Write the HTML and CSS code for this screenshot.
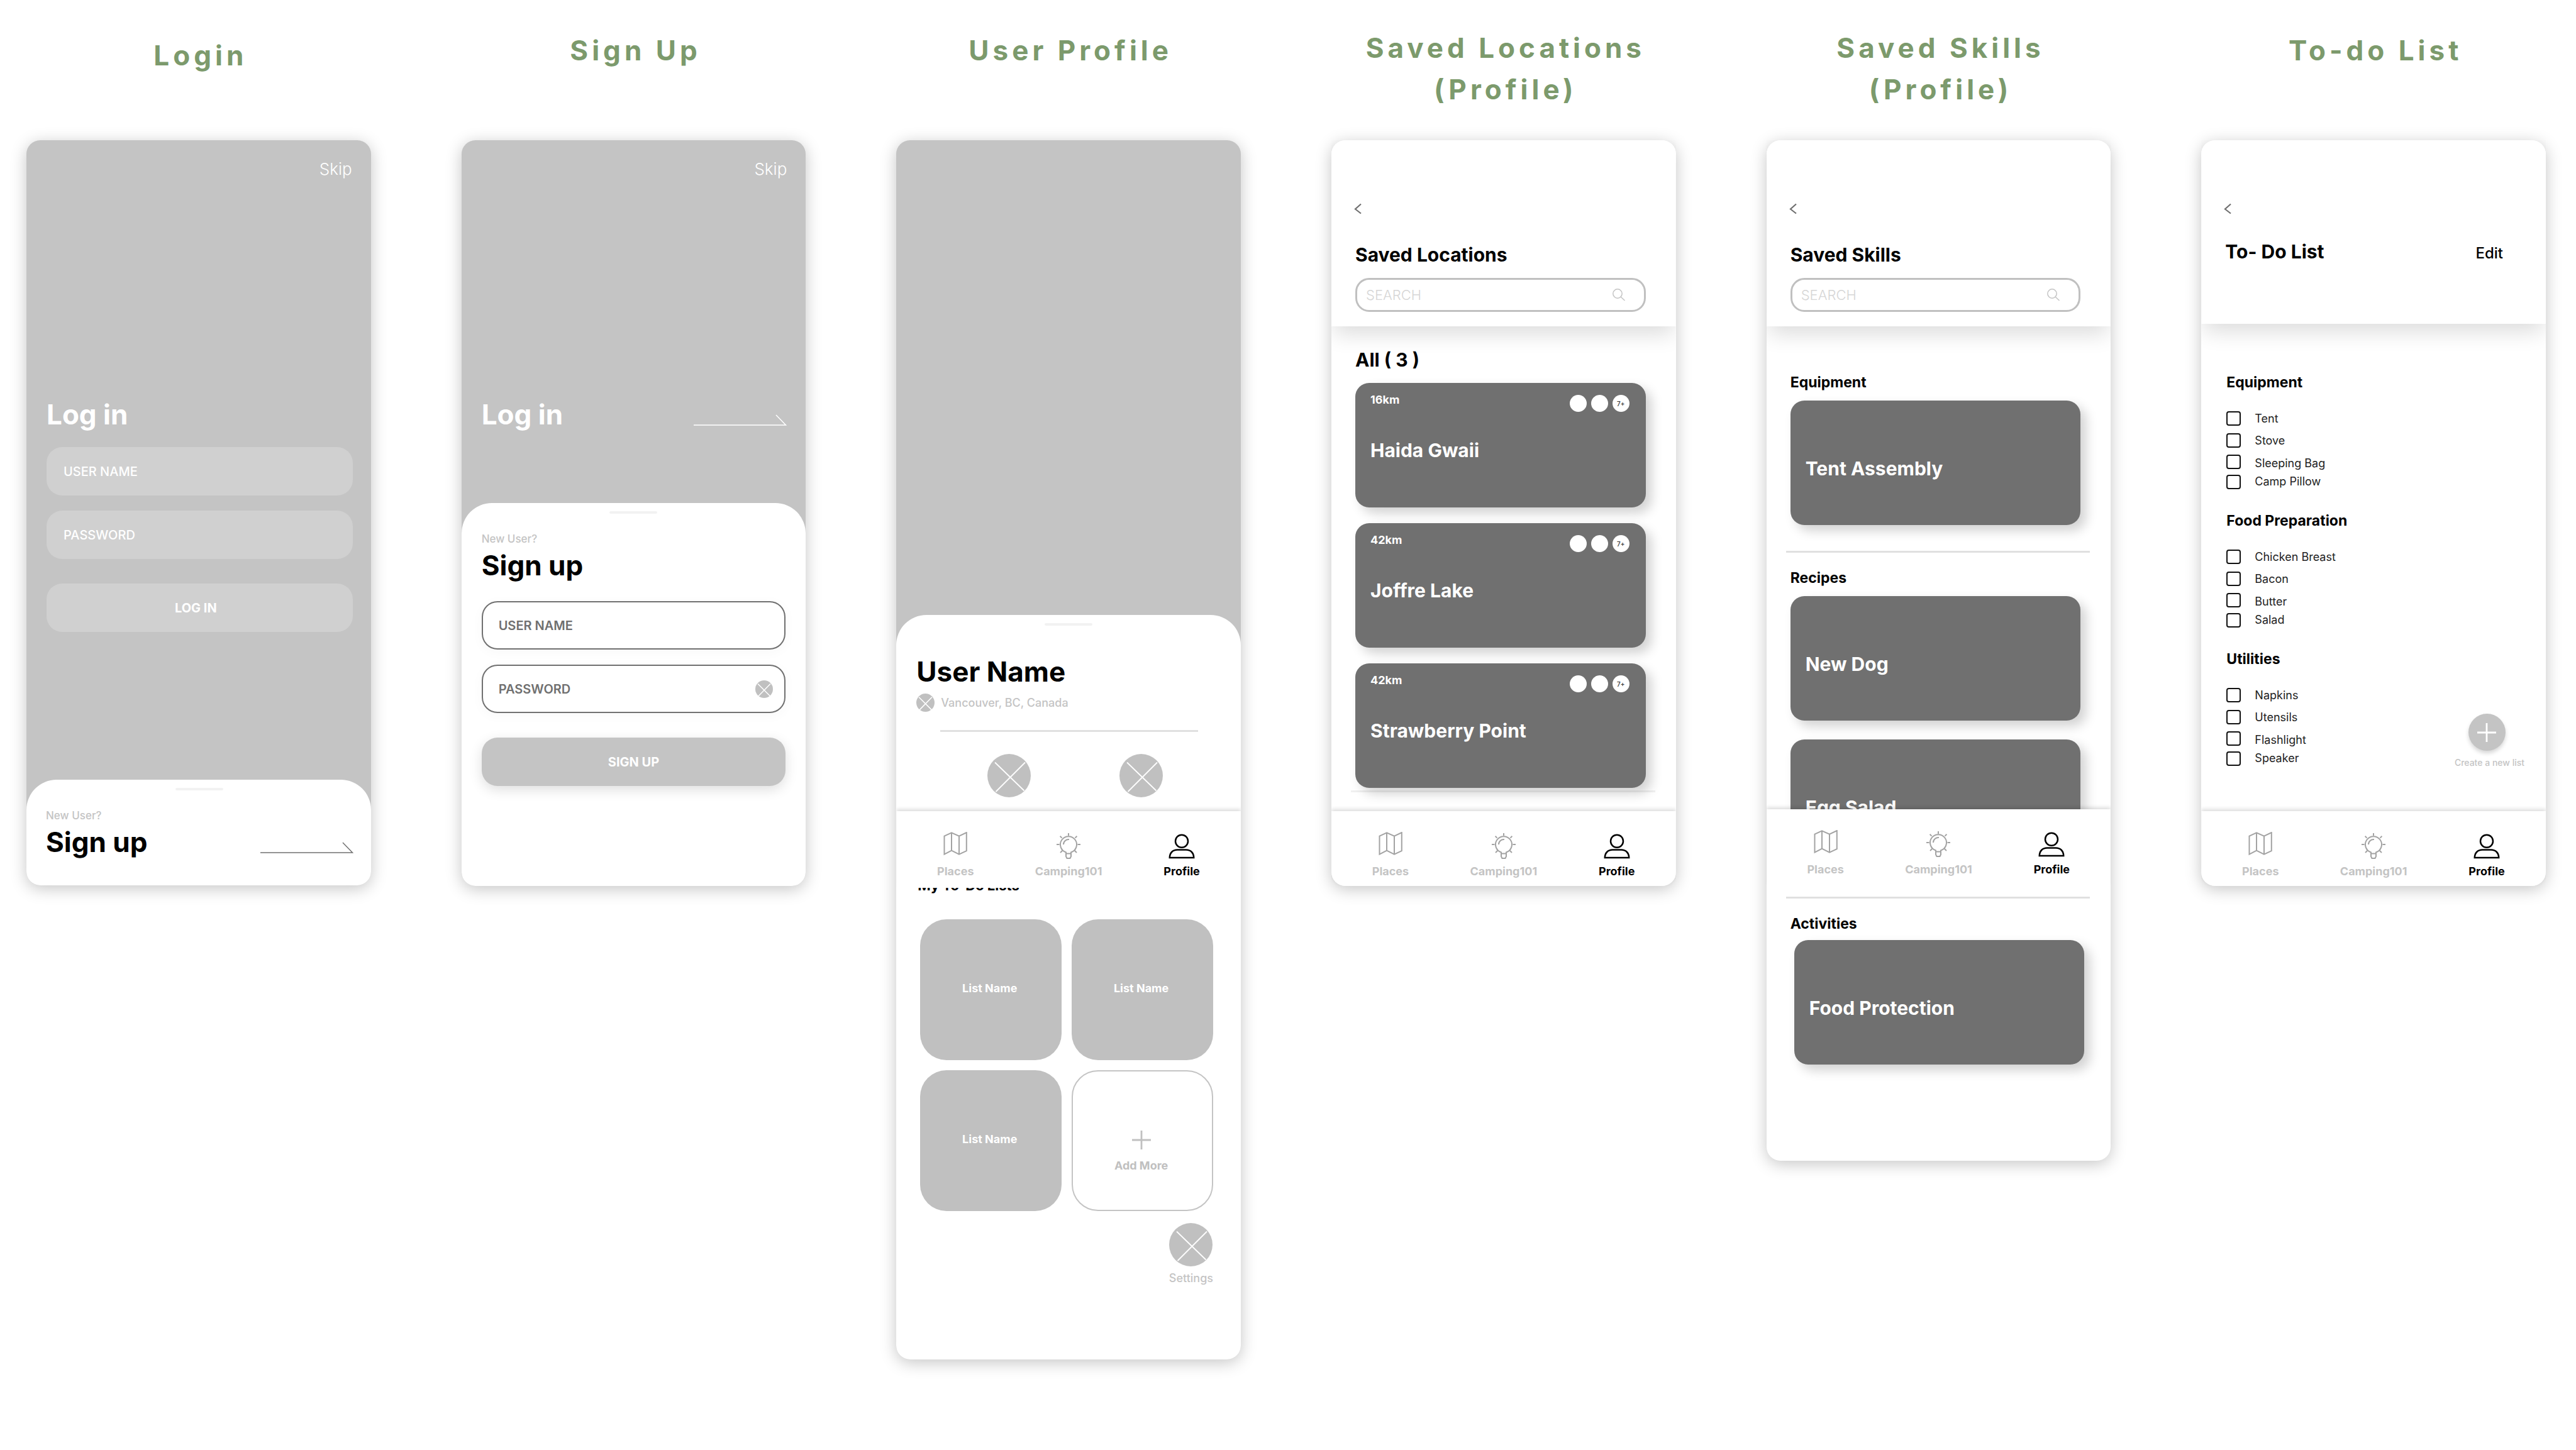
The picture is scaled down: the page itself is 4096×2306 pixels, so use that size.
FILE: index.html
```html
<!DOCTYPE html>
<html lang="en">
<head>
<meta charset="utf-8">
<title>Profile wireframes</title>
<link rel="stylesheet" href="styles.css">
</head>
<body>
<svg class="sprite" aria-hidden="true">
  <symbol id="map" viewBox="0 0 44 44"><path d="M4.500 6.700 16 1.300 28 6.700 39.800 1V30.200L28 35.600 16 29.700 4.500 35.700ZM16 1.300V29.700M28 6.700V35.600" fill="none" stroke="#a3a3a3" stroke-width="2"/></symbol>
  <symbol id="bulb" viewBox="0 0 44 44"><path d="M18 32.500A13 13 0 1 1 26 32.500V39L24.500 42H19.500L18 39ZM18 34.500H26M14 20A8 8 0 0 1 23 12M22 2V6M3 20H7.500M36.500 20H41M8.600 6.700 11.500 9.600M35.400 6.700 32.500 9.600M9 33 12 30M35 33 32 30" fill="none" stroke="#a3a3a3" stroke-width="2"/></symbol>
  <symbol id="person" viewBox="0 0 44 44"><circle cx="22" cy="14.700" r="10" fill="none" stroke="#000" stroke-width="2.500"/><path d="M2.800 41C3 33 8 28.500 15 28.500H29C36 28.500 41 33 41.200 41Z" fill="none" stroke="#000" stroke-width="2.500"/></symbol>
  <symbol id="cross" viewBox="0 0 69 69"><circle cx="34.500" cy="34.500" r="34.500" fill="#c0c0c0"/><path d="M12 13.500 58.500 58.500M60 13.500 13.500 60" stroke="#fff" stroke-width="1.800"/></symbol>
  <symbol id="cross-small" viewBox="0 0 28 28"><circle cx="14" cy="14" r="14" fill="#c0c0c0"/><path d="M4 5.500 23.500 25M24 5.500 5 25" stroke="#fff" stroke-width="1.500"/></symbol>
  <symbol id="back" viewBox="0 0 12 18"><path d="M11 1.500 2 9.500 11 16.500" fill="none" stroke="#707070" stroke-width="2.200"/></symbol>
  <symbol id="lens" viewBox="0 0 20 20"><circle cx="8" cy="8" r="7.200" fill="none" stroke="#c4c4c4" stroke-width="1.500"/><path d="M13 13 19.500 19" stroke="#c4c4c4" stroke-width="1.500"/></symbol>
  <symbol id="arrow" viewBox="0 0 148 18"><path d="M0 17H146.500L131 1" fill="none" stroke="currentColor" stroke-width="1.500"/></symbol>
  <symbol id="plus" viewBox="0 0 30 30"><path d="M15 0V30M0 15H30" stroke="currentColor" stroke-width="2.800"/></symbol>
</svg>

<main class="board">
  <section class="screen">
    <h2 class="caption caption-low">Login</h2>
    <div class="phone phone-gray">
      <a class="skip" href="#">Skip</a>
      <h3 class="hero-title">Log in</h3>
      <form class="form form-dark">
        <input class="field" type="text" placeholder="USER NAME" aria-label="User name">
        <input class="field" type="password" placeholder="PASSWORD" aria-label="Password">
        <button class="submit submit-login" type="button">LOG IN</button>
      </form>
      <div class="sheet sheet-login">
        <span class="handle"></span>
        <p class="hint">New User?</p>
        <div class="sheet-row">
          <h3 class="big">Sign up</h3>
          <a class="arrow" href="#" aria-label="Sign up"><svg><use href="#arrow"/></svg></a>
        </div>
      </div>
    </div>
  </section>

  <section class="screen">
    <h2 class="caption">Sign Up</h2>
    <div class="phone phone-gray">
      <a class="skip" href="#">Skip</a>
      <div class="hero-row">
        <h3 class="big">Log in</h3>
        <a class="arrow arrow-light" href="#" aria-label="Log in"><svg><use href="#arrow"/></svg></a>
      </div>
      <div class="sheet sheet-signup">
        <span class="handle"></span>
        <p class="hint">New User?</p>
        <h3 class="big">Sign up</h3>
        <form class="form form-light">
          <input class="field" type="text" placeholder="USER NAME" aria-label="User name">
          <div class="field field-group">
            <input type="password" placeholder="PASSWORD" aria-label="Password">
            <button type="button" class="clear" aria-label="Clear"><svg><use href="#cross-small"/></svg></button>
          </div>
          <button class="submit" type="button">SIGN UP</button>
        </form>
      </div>
    </div>
  </section>

  <section class="screen">
    <h2 class="caption">User Profile</h2>
    <div class="phone phone-gray">
      <div class="sheet sheet-profile">
        <span class="handle"></span>
        <h3 class="big">User Name</h3>
        <p class="place"><svg><use href="#cross-small"/></svg>Vancouver, BC, Canada</p>
        <hr class="rule rule-profile">
        <div class="shortcuts">
          <button type="button" class="round" aria-label="Saved locations"><svg><use href="#cross"/></svg></button>
          <button type="button" class="round" aria-label="Saved skills"><svg><use href="#cross"/></svg></button>
        </div>
        <h4 class="lists-title">My To-Do Lists</h4>
        <div class="lists">
          <a class="list" href="#">List Name</a>
          <a class="list" href="#">List Name</a>
          <a class="list" href="#">List Name</a>
          <button type="button" class="list list-add"><svg><use href="#plus"/></svg>Add More</button>
        </div>
        <a class="settings" href="#"><svg><use href="#cross"/></svg>Settings</a>
      </div>
      <nav class="nav nav-over nav-profile">
        <a href="#"><svg><use href="#map"/></svg>Places</a>
        <a href="#"><svg><use href="#bulb"/></svg>Camping101</a>
        <a class="active" href="#"><svg><use href="#person"/></svg>Profile</a>
      </nav>
    </div>
  </section>

  <section class="screen">
    <h2 class="caption caption-two">Saved Locations<br>(Profile)</h2>
    <div class="phone">
      <header class="head">
        <a class="back" href="#" aria-label="Back"><svg><use href="#back"/></svg></a>
        <h3 class="title">Saved Locations</h3>
        <div class="search"><input type="search" placeholder="SEARCH" aria-label="Search locations"><svg><use href="#lens"/></svg></div>
      </header>
      <div class="locations">
        <h3 class="title">All ( 3 )</h3>
        <a class="card" href="#"><span class="meta">16km<span class="dots"><i></i><i></i><i>7+</i></span></span><span class="name">Haida Gwaii</span></a>
        <a class="card" href="#"><span class="meta">42km<span class="dots"><i></i><i></i><i>7+</i></span></span><span class="name">Joffre Lake</span></a>
        <a class="card" href="#"><span class="meta">42km<span class="dots"><i></i><i></i><i>7+</i></span></span><span class="name">Strawberry Point</span></a>
      </div>
      <hr class="rule rule-faint">
      <nav class="nav">
        <a href="#"><svg><use href="#map"/></svg>Places</a>
        <a href="#"><svg><use href="#bulb"/></svg>Camping101</a>
        <a class="active" href="#"><svg><use href="#person"/></svg>Profile</a>
      </nav>
    </div>
  </section>

  <section class="screen">
    <h2 class="caption caption-two">Saved Skills<br>(Profile)</h2>
    <div class="phone">
      <header class="head">
        <a class="back" href="#" aria-label="Back"><svg><use href="#back"/></svg></a>
        <h3 class="title">Saved Skills</h3>
        <div class="search"><input type="search" placeholder="SEARCH" aria-label="Search skills"><svg><use href="#lens"/></svg></div>
      </header>
      <div class="skills">
        <section class="skill-group">
          <h4 class="subtitle">Equipment</h4>
          <a class="card" href="#"><span class="name">Tent Assembly</span></a>
        </section>
        <hr class="rule">
        <section class="skill-group skill-recipes">
          <h4 class="subtitle">Recipes</h4>
          <a class="card" href="#"><span class="name">New Dog</span></a>
          <a class="card" href="#"><span class="name">Egg Salad</span></a>
        </section>
        <hr class="rule">
        <section class="skill-group skill-activities">
          <h4 class="subtitle">Activities</h4>
          <a class="card" href="#"><span class="name">Food Protection</span></a>
        </section>
      </div>
      <nav class="nav nav-over nav-skills">
        <a href="#"><svg><use href="#map"/></svg>Places</a>
        <a href="#"><svg><use href="#bulb"/></svg>Camping101</a>
        <a class="active" href="#"><svg><use href="#person"/></svg>Profile</a>
      </nav>
    </div>
  </section>

  <section class="screen">
    <h2 class="caption">To-do List</h2>
    <div class="phone">
      <header class="head head-todo">
        <a class="back" href="#" aria-label="Back"><svg><use href="#back"/></svg></a>
        <div class="head-row">
          <h3 class="title">To- Do List</h3>
          <button type="button" class="edit">Edit</button>
        </div>
      </header>
      <div class="todo">
        <div class="groups">
          <section>
            <h4 class="subtitle">Equipment</h4>
            <ul class="checks">
              <li><label><input type="checkbox"><span>Tent</span></label></li>
              <li><label><input type="checkbox"><span>Stove</span></label></li>
              <li><label><input type="checkbox"><span>Sleeping Bag</span></label></li>
              <li><label><input type="checkbox"><span>Camp Pillow</span></label></li>
            </ul>
          </section>
          <section>
            <h4 class="subtitle">Food Preparation</h4>
            <ul class="checks">
              <li><label><input type="checkbox"><span>Chicken Breast</span></label></li>
              <li><label><input type="checkbox"><span>Bacon</span></label></li>
              <li><label><input type="checkbox"><span>Butter</span></label></li>
              <li><label><input type="checkbox"><span>Salad</span></label></li>
            </ul>
          </section>
          <section>
            <h4 class="subtitle">Utilities</h4>
            <ul class="checks">
              <li><label><input type="checkbox"><span>Napkins</span></label></li>
              <li><label><input type="checkbox"><span>Utensils</span></label></li>
              <li><label><input type="checkbox"><span>Flashlight</span></label></li>
              <li><label><input type="checkbox"><span>Speaker</span></label></li>
            </ul>
          </section>
        </div>
        <button type="button" class="create"><span class="fab"><svg><use href="#plus"/></svg></span>Create a new list</button>
      </div>
      <nav class="nav">
        <a href="#"><svg><use href="#map"/></svg>Places</a>
        <a href="#"><svg><use href="#bulb"/></svg>Camping101</a>
        <a class="active" href="#"><svg><use href="#person"/></svg>Profile</a>
      </nav>
    </div>
  </section>
</main>
</body>
</html>
```
FILE: styles.css
```css
* { box-sizing: border-box; margin: 0; padding: 0; }

body {
  background: #fff;
  color: #000;
  font-family: Inter, "Open Sans", sans-serif;
  font-size: 18px;
  line-height: 22px;
}

a { color: inherit; text-decoration: none; }
button, input { font: inherit; color: inherit; background: none; border: 0; outline: 0; }
svg { display: block; }
ul { list-style: none; }
.sprite { display: none; }

/* Board of screens */
.board {
  display: grid;
  grid-template-columns: repeat(6, minmax(0, 1fr));
  gap: 144px;
  align-items: start;
  padding: 0 48px 120px 42px;
}

.caption {
  min-height: 223px;
  padding: 47px 0 0 6px;
  color: #7c9a6c;
  font-size: 44px;
  font-weight: 700;
  line-height: 66px;
  letter-spacing: 6px;
  text-align: center;
  white-space: nowrap;
}
.caption-low { padding-top: 55px; }
.caption-two { padding-top: 43px; }

.phone {
  position: relative;
  display: flex;
  flex-direction: column;
  border-radius: 22px;
  background: #fff;
  box-shadow: 0 5px 26px rgba(0, 0, 0, .23);
}
.phone-gray { background: #c4c4c4; }

/* Shared text */
.big, .hero-title { font-size: 44px; line-height: 54px; font-weight: 700; }
.title { font-size: 30px; line-height: 36px; font-weight: 700; }
.subtitle { font-size: 23px; line-height: 28px; font-weight: 700; }

/* Login and sign up */
.skip {
  align-self: flex-end;
  padding: 31px 30px 0 0;
  color: #fff;
  font-size: 26px;
  font-weight: 300;
  line-height: 30px;
}
.hero-title { margin: 348px 0 0 32px; color: #fff; }
.hero-row {
  display: flex;
  justify-content: space-between;
  align-items: flex-end;
  margin: 348px 30px 0 32px;
  color: #fff;
}

.form { display: flex; flex-direction: column; gap: 24px; }
.form-dark { margin: 25px 29px 0 32px; color: #fff; }
.form-light { margin-top: 30px; color: #707070; }
.field {
  width: 100%;
  height: 77px;
  padding: 0 27px;
  border-radius: 25px;
  font-size: 20px;
  font-weight: 500;
}
.field::placeholder, .field input::placeholder { color: inherit; opacity: 1; }
.form-dark .field { background: #d0d0d0; }
.form-light .field {
  padding: 0 25px;
  border: 2px solid #707070;
  font-weight: 600;
  box-shadow: 0 4px 20px rgba(0, 0, 0, .03);
}
.field-group { display: flex; align-items: center; justify-content: space-between; }
.form-light .field-group { padding-right: 18px; }
.field-group input { flex: 1; min-width: 0; }
.clear svg { width: 28px; height: 28px; }
.submit {
  height: 77px;
  margin-top: 15px;
  border-radius: 25px;
  background: #c4c4c4;
  color: #fff;
  font-size: 20px;
  font-weight: 700;
  box-shadow: 0 6px 20px rgba(0, 0, 0, .13);
}
.submit-login { padding-right: 12px; background: #d0d0d0; box-shadow: none; }

.sheet {
  display: flex;
  flex-direction: column;
  border-radius: 48px 48px 22px 22px;
  background: #fff;
}
.sheet-login { margin-top: 235px; padding: 13px 28px 42px 31px; }
.sheet-signup { margin-top: 114px; padding: 13px 32px 159px; }
.handle { align-self: center; width: 76px; height: 4px; border-radius: 2px; background: #f2f2f2; }
.hint { margin: 30px 0 5px; color: #c4c4c4; font-size: 17px; font-weight: 500; line-height: 20px; }
.sheet-row { display: flex; justify-content: space-between; align-items: flex-end; }
.arrow { margin-bottom: 9px; color: #707070; }
.arrow svg { width: 148px; height: 18px; }
.arrow-light { color: #fff; }

/* User profile */
.sheet-profile { margin-top: 755px; padding: 13px 44px 118px 34px; }
.sheet-profile .handle { margin-left: 10px; }
.sheet-profile .big { margin: 46px 0 0 -2px; }
.place {
  display: flex;
  align-items: center;
  gap: 10px;
  margin: 8px 0 0 -2px;
  color: #c4c4c4;
  font-weight: 500;
}
.place svg { width: 29px; height: 29px; }
.rule { height: 3px; margin: 0 33px 0 31px; border: 0; background: #e0e0e0; }
.rule-profile { margin: 29px 24px 0 36px; }
.shortcuts { display: flex; justify-content: center; gap: 141px; margin: 35px 0 0 30px; }
.round svg, .settings svg { width: 69px; height: 69px; }
.lists-title { margin-top: 126px; font-size: 22px; line-height: 28px; font-weight: 700; }
.lists {
  display: grid;
  grid-template-columns: 1fr 1fr;
  gap: 16px;
  margin: 40px 0 0 4px;
}
.list {
  display: flex;
  flex-direction: column;
  align-items: center;
  justify-content: center;
  height: 224px;
  padding: 0 4px 4px 0;
  border-radius: 42px;
  background: #c0c0c0;
  color: #fff;
  font-weight: 700;
}
.list-add {
  gap: 15px;
  padding-top: 38px;
  border: 2px solid #c4c4c4;
  background: #fff;
  color: #c0c0c0;
}
.list-add svg { width: 30px; height: 30px; }
.settings {
  display: flex;
  flex-direction: column;
  align-items: center;
  align-self: flex-end;
  gap: 8px;
  margin-top: 19px;
  color: #c4c4c4;
  font-weight: 500;
}

/* Bottom navigation */
.nav {
  display: grid;
  grid-template-columns: repeat(3, 1fr);
  height: 119px;
  padding: 33px 4px 0;
  border-radius: 0 0 22px 22px;
  background: #fff;
  color: #c4c4c4;
  font-weight: 700;
  box-shadow: 0 -3px 6px rgba(0, 0, 0, .14);
  clip-path: inset(-20px 0 0 0);
}
.nav a { display: flex; flex-direction: column; align-items: center; gap: 8px; }
.nav svg { width: 44px; height: 44px; }
.nav .active { color: #000; }
.nav-over { position: absolute; left: 0; right: 0; height: 122px; border-radius: 0; }
.nav-profile { top: 1067px; }
.nav-skills { top: 1064px; }

/* Screen header */
.head {
  padding: 100px 48px 23px 38px;
  border-radius: 22px 22px 0 0;
  background: #fff;
  box-shadow: 0 16px 34px -4px rgba(0, 0, 0, .14);
  clip-path: inset(0 0 -80px 0);
}
.back { display: block; margin-left: -2px; }
.back svg { width: 12px; height: 18px; }
.head .title { margin-top: 46px; }
.search {
  display: flex;
  align-items: center;
  height: 54px;
  margin-top: 19px;
  padding: 0 30px 0 14px;
  border: 3px solid #c0c0c0;
  border-radius: 22px;
}
.search input { flex: 1; min-width: 0; font-size: 22px; font-weight: 300; }
.search input::placeholder { color: #d6d6d6; opacity: 1; }
.search svg { width: 20px; height: 20px; }
.head-todo { padding-bottom: 97px; }
.head-row { display: flex; justify-content: space-between; align-items: baseline; padding-right: 20px; }
.head-todo .title { margin-top: 41px; }
.edit { font-size: 24px; font-weight: 500; line-height: 28px; }

/* Cards */
.card {
  display: flex;
  flex-direction: column;
  justify-content: center;
  height: 198px;
  padding: 0 24px;
  border-radius: 22px;
  background: #707070;
  color: #fff;
  box-shadow: 9px 9px 18px rgba(0, 0, 0, .18);
}
.name { padding-top: 18px; font-size: 30px; line-height: 36px; font-weight: 700; }
.meta {
  display: flex;
  justify-content: space-between;
  height: 71px;
  font-weight: 700;
}
.locations .card { justify-content: flex-start; padding-top: 16px; }
.locations .name { padding-top: 2px; }
.dots { display: flex; gap: 7px; padding: 3px 2px 0 0; }
.dots i {
  width: 27px;
  height: 27px;
  border-radius: 50%;
  background: #fff;
  color: #333;
  font-size: 10px;
  font-style: normal;
  font-weight: 500;
  line-height: 28px;
  text-align: center;
}
.locations { display: grid; gap: 25px; padding: 35px 48px 0 38px; }
.locations .title { margin-bottom: -6px; }
.rule-faint { margin-top: 4px; margin-bottom: 30px; background: rgba(0, 0, 0, .06); }

.skills { padding: 75px 0 153px; }
.skill-group { display: grid; gap: 15px; padding: 0 48px 41px 38px; }
.skill-recipes { padding-top: 26px; padding-bottom: 52px; }
.skill-recipes .card + .card { margin-top: 15px; }
.skill-activities { gap: 12px; padding: 26px 42px 0 38px; }
.skill-activities .card { margin-left: 6px; }

/* To-do list */
.todo {
  display: flex;
  justify-content: space-between;
  align-items: flex-end;
  padding: 79px 34px 68px 40px;
}
.groups { display: grid; gap: 32px; }
.checks { margin-top: 26px; }
.checks label { display: flex; align-items: center; gap: 22px; height: 35px; color: #222; }
.checks li:nth-child(n + 3) label { height: 32px; }
.checks li:nth-child(3) span { padding-top: 6px; }
.checks input {
  appearance: none;
  width: 23px;
  height: 23px;
  border: 2px solid #111;
  border-radius: 4px;
}
.create {
  display: flex;
  flex-direction: column;
  align-items: center;
  gap: 10px;
  color: #c4c4c4;
  font-size: 14px;
  font-weight: 500;
  line-height: 18px;
}
.fab {
  display: grid;
  place-items: center;
  width: 59px;
  height: 59px;
  margin-right: 8px;
  border-radius: 50%;
  background: #c4c4c4;
  color: #fff;
  box-shadow: 0 4px 6px rgba(0, 0, 0, .16);
}
.fab svg { width: 30px; height: 30px; }
```
